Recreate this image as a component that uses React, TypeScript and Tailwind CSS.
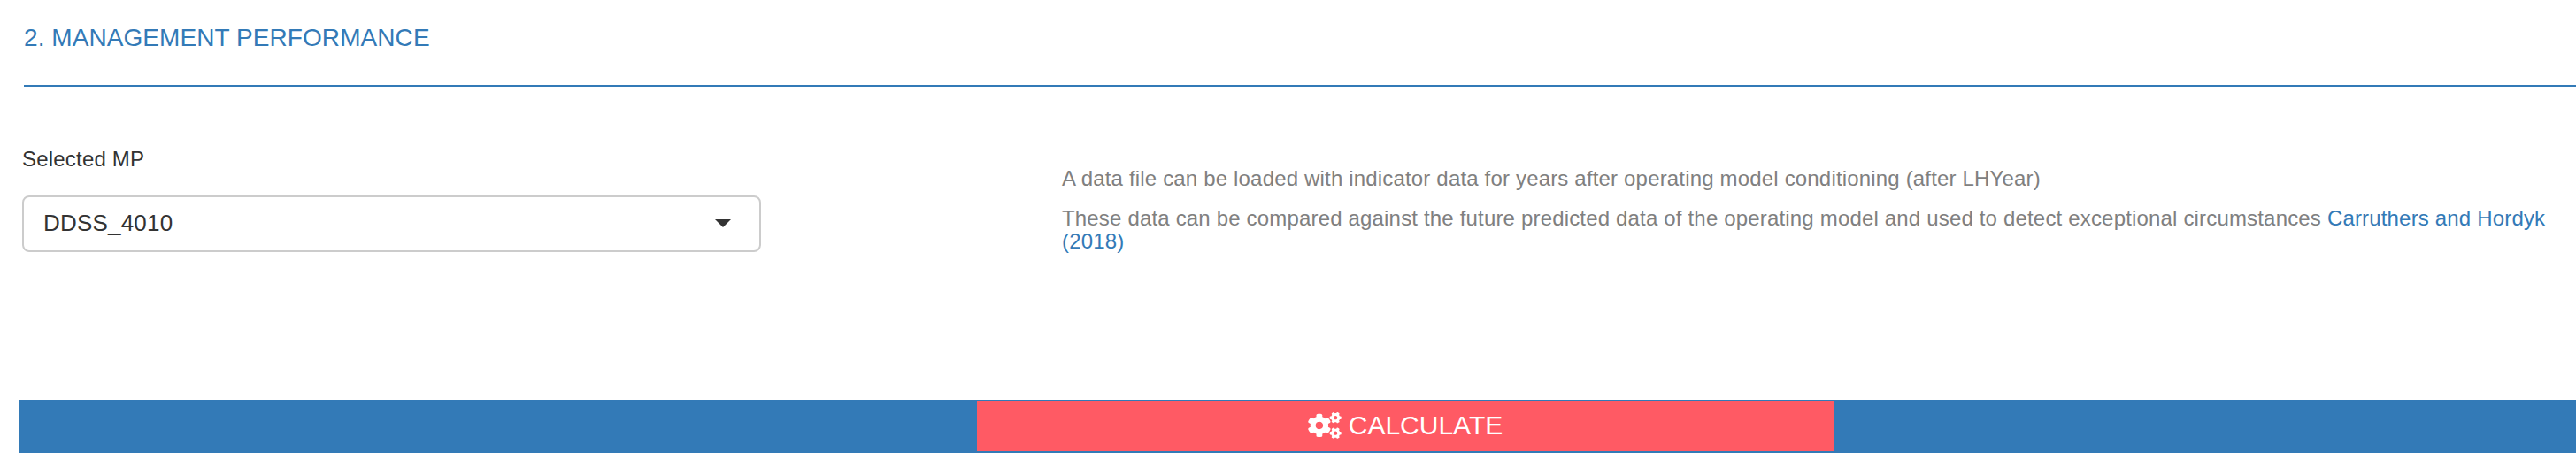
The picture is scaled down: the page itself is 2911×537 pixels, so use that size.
import { FaCogs } from "react-icons/fa";

export default function App() {
  return (
    <main className="h-[537px] w-full overflow-hidden bg-white font-['Liberation_Sans',Arial,sans-serif] text-[#333]">
      <header className="ml-[27px] h-[98px] border-b-2 border-[#337ab7] pt-[27px]">
        <h4 className="text-[28px] leading-[32px] tracking-[0.07px] whitespace-nowrap text-[#337ab7]">2. MANAGEMENT PERFORMANCE</h4>
      </header>
      <section className="flex h-[354px]">
        <div className="ml-[25px] w-[835px] pt-[66px]">
          <label className="block text-[24px] leading-[32px] tracking-[0.2px] whitespace-nowrap">Selected MP</label>
          <div className="mt-[25px] flex h-[64px] items-center justify-between rounded-[8px] border-2 border-[#ccc] pr-[32px] pb-[2px] pl-[22px]">
            <span className="text-[26px] leading-[32px] tracking-[0.2px]">DDSS_4010</span>
            <svg className="h-[9px] w-[18px]" viewBox="0 0 18 9" fill="#333">
              <path d="M0 0h18L9 9z" />
            </svg>
          </div>
        </div>
        <div className="ml-[340px] pt-[91px] text-[24px] leading-[26px] tracking-[0.173px] whitespace-nowrap text-[#808080]">
          <p>A data file can be loaded with indicator data for years after operating model conditioning (after LHYear)</p>
          <p className="mt-[19px]">
            These data can be compared against the future predicted data of the operating model and used to detect exceptional circumstances{" "}
            <a className="text-[#337ab7]">
              Carruthers and Hordyk
              <br />
              (2018)
            </a>
          </p>
        </div>
      </section>
      <div className="ml-[22px] h-[60px] bg-[#337ab7] pt-px pl-[1082px]">
        <button className="flex h-[57px] w-[969px] items-center justify-center gap-[8px] bg-[#ff5a64] pr-px pb-px text-white">
          <FaCogs className="h-[30px] w-[38px]" />
          <span className="text-[30px] leading-[36px]">CALCULATE</span>
        </button>
      </div>
    </main>
  );
}
